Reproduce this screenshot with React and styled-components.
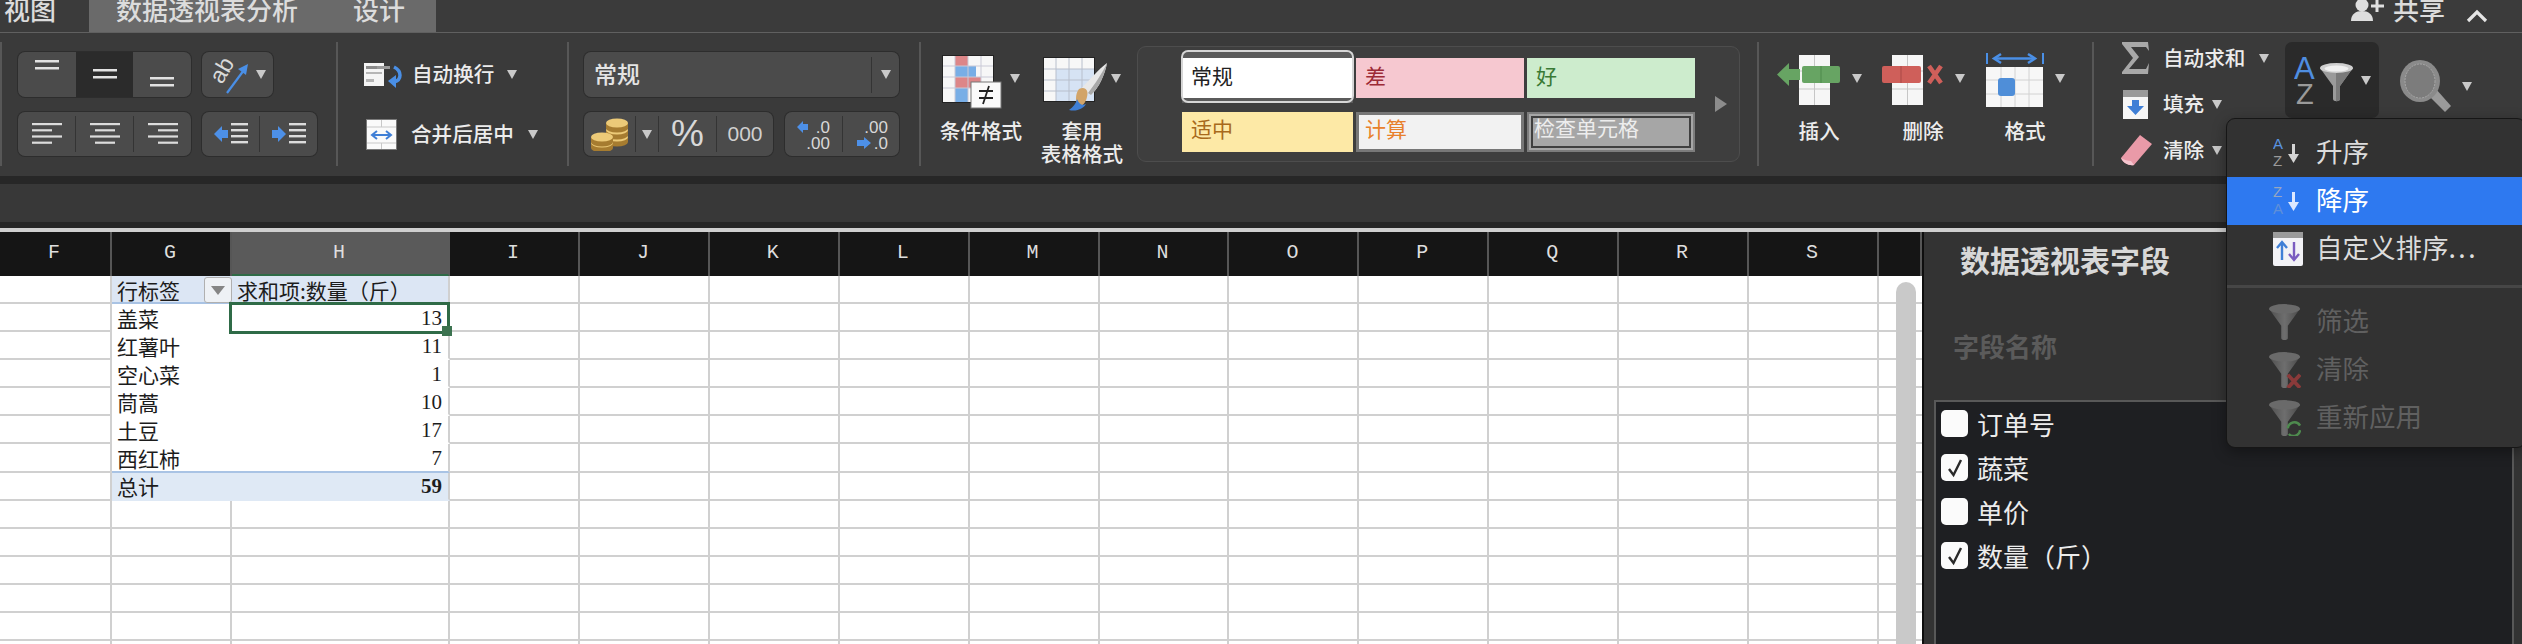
import styled, { createGlobalStyle } from "styled-components";

const CJK = `"Noto Sans CJK SC", "Noto Sans", sans-serif`;

const GlobalStyle = createGlobalStyle`
  html, body {
    margin: 0;
    padding: 0;
    background: #333;
    overflow: hidden;
  }
  body {
    font-family: ${CJK};
  }
`;

const Page = styled.div`
  position: relative;
  width: 2522px;
  height: 644px;
  overflow: hidden;
  background: #3a3a3a;
  color: #e2e2e2;
`;

/* ---------- tabs ---------- */

const TabBar = styled.div`
  display: flex;
  height: 32px;
  border-bottom: 1px solid #606060;
  box-sizing: content-box;
  background: #3b3b3b;
  overflow: hidden;
`;

const Tab = styled.div`
  font-size: 26px;
  font-weight: 500;
  line-height: 26px;
  margin-top: -4px;
  margin-left: ${(p) => p.$left || 0}px;
  color: #dcdcdc;
  white-space: nowrap;
`;

const ActiveTabs = styled.div`
  display: flex;
  width: 347px;
  height: 32px;
  margin-left: 33px;
  background: #6a6a6a;
`;

const Share = styled.div`
  display: flex;
  align-items: flex-start;
  margin-left: auto;
  padding-right: 34px;
`;

const ChevronBox = styled.span`
  margin: 4px 0 0 21px;
`;

/* ---------- ribbon ---------- */

const Ribbon = styled.div`
  display: flex;
  height: 143px;
  padding-top: 9px;
  box-sizing: border-box;
  background: #3a3a3a;
`;

const Section = styled.section`
  flex: none;
  display: ${(p) => (p.$flex ? "flex" : "block")};
  width: ${(p) => p.$w}px;
  height: 124px;
  box-sizing: border-box;
  padding-left: ${(p) => p.$pad}px;
  border-left: 2px solid #575757;
`;

const ToolRows = styled.div`
  display: grid;
  grid-template-rows: 45px 44px;
  row-gap: 15px;
  padding-top: 10px;
`;

const ToolRow = styled.div`
  display: flex;
  align-items: center;
  gap: ${(p) => p.$gap || 11}px;
`;

const Group = styled.div`
  display: flex;
  align-items: center;
  width: ${(p) => p.$w}px;
  height: 100%;
  box-sizing: border-box;
  border-radius: 7px;
  background: #4b4b4b;
  box-shadow: 0 0 0 1px #2d2d2d;
  overflow: hidden;
`;

const Segment = styled.div`
  flex: ${(p) => (p.$w ? "none" : "1")};
  width: ${(p) => (p.$w ? `${p.$w}px` : "auto")};
  height: 100%;
  display: flex;
  align-items: center;
  justify-content: center;
  gap: 6px;
  background: ${(p) => (p.$on ? "#2b2b2b" : "transparent")};
`;

const Divider = styled.span`
  flex: none;
  width: 1px;
  height: 36px;
  background: #343434;
`;

const Caret = styled.span`
  flex: none;
  width: 0;
  height: 0;
  margin-left: ${(p) => p.$left || 0}px;
  margin-top: ${(p) => p.$top || 0}px;
  border-left: 5px solid transparent;
  border-right: 5px solid transparent;
  border-top: 9px solid #c9c9c9;
`;

const WrapRow = styled.div`
  display: flex;
  align-items: center;
  height: 100%;
  padding-left: ${(p) => p.$left || 0}px;
`;

const ToolText = styled.span`
  margin-left: ${(p) => p.$left || 0}px;
  padding-bottom: 3px;
  font-size: ${(p) => p.$size || 20.6}px;
  font-weight: 500;
  color: #ececec;
  white-space: nowrap;
`;

const Combo = styled(Group)`
  padding-left: 10px;
`;

const ComboText = styled.span`
  flex: 1;
  padding-bottom: 3px;
  font-size: 23px;
  font-weight: 500;
  color: #e4e4e4;
`;

const Percent = styled.span`
  font-family: "Liberation Sans", sans-serif;
  font-size: 37px;
  color: #d8d8d8;
`;

const Thousands = styled.span`
  font-family: "Liberation Sans", sans-serif;
  font-size: 21px;
  color: #d0d0d0;
`;

const LargeButton = styled.div`
  flex: none;
  width: ${(p) => p.$w}px;
  display: flex;
  flex-direction: column;
  align-items: center;
`;

const LargeIcon = styled.div`
  display: flex;
  align-items: flex-start;
  height: 54px;
  margin: 10px 0 13px;
`;

const LargeLabel = styled.div`
  font-size: 20.6px;
  font-weight: 500;
  line-height: 23px;
  color: #ececec;
  text-align: center;
  white-space: nowrap;
`;

const Gallery = styled.div`
  flex: none;
  display: flex;
  width: 603px;
  height: 116px;
  margin: 4px 0 0 4px;
  box-sizing: border-box;
  border: 1px solid #4d4d4d;
  border-radius: 9px;
  background: #3e3e3e;
`;

const StyleGrid = styled.div`
  display: grid;
  grid-template-columns: 171px 168px 168px;
  grid-auto-rows: 40px;
  column-gap: 3px;
  row-gap: 14px;
  padding: 11px 0 0 44px;
`;

const StyleCell = styled.div`
  position: relative;
  box-sizing: border-box;
  padding-left: ${(p) => p.$pad || 9}px;
  font-size: 21px;
  line-height: ${(p) => p.$line || 33}px;
  background: ${(p) => p.$bg};
  color: ${(p) => p.$fg};
  border: ${(p) => p.$border || "none"};
  outline: ${(p) => p.$outline || "none"};
  outline-offset: -6px;
`;

const CurrentStyle = styled(StyleCell)`
  box-shadow: 0 -6px 0 #5b5b5b, 0 5px 0 #5b5b5b;
  &::after {
    content: "";
    position: absolute;
    inset: -8px -1px -5px -1px;
    border: 2px solid #d6d6d6;
    border-radius: 7px;
  }
`;

const MoreStyles = styled.span`
  width: 0;
  height: 0;
  margin: 49px 0 0 20px;
  border-top: 8px solid transparent;
  border-bottom: 8px solid transparent;
  border-left: 12px solid #8c8c8c;
`;

const EditList = styled.div`
  flex: none;
  display: grid;
  grid-auto-rows: 32px;
  row-gap: 14px;
  width: 165px;
`;

const EditRow = styled.div`
  display: flex;
  align-items: center;
`;

const EditIcon = styled.span`
  flex: none;
  display: flex;
  justify-content: center;
  width: 32px;
  margin-right: 11px;
`;

const SortButton = styled.div`
  flex: none;
  display: flex;
  align-items: center;
  gap: 5px;
  width: 94px;
  height: 76px;
  box-sizing: border-box;
  padding-left: 9px;
  border-radius: 7px;
  background: #2a2a2a;
`;

const FindButton = styled.div`
  flex: none;
  display: flex;
  align-items: center;
  gap: 11px;
  height: 64px;
  margin: 12px 0 0 20px;
`;

/* ---------- bars under the ribbon ---------- */

const Strip = styled.div`
  height: ${(p) => p.$h}px;
  background: ${(p) => p.$bg};
`;

/* ---------- sheet ---------- */

const Main = styled.div`
  display: flex;
  height: 412px;
`;

const Sheet = styled.div`
  position: relative;
  flex: none;
  width: 1922px;
  overflow: hidden;
  background: #fff;
`;

const COLUMNS = "112px 120px 218px 130px repeat(10, 129.9px) 1fr";

const HeaderRow = styled.div`
  display: grid;
  grid-template-columns: ${COLUMNS};
  height: 44px;
  background: #151515;
`;

const HeaderCell = styled.div`
  box-sizing: border-box;
  padding-right: 2px;
  border-right: 2px solid ${(p) => (p.$on ? "#5a5a5a" : "#565656")};
  border-bottom: ${(p) => (p.$on ? "3px solid #2f6b47" : "none")};
  background: ${(p) => (p.$on ? "#5a5a5a" : "transparent")};
  font-family: "Liberation Mono", monospace;
  font-size: 20px;
  line-height: 42px;
  text-align: center;
  color: #dedede;
`;

const Row = styled.div`
  display: grid;
  grid-template-columns: ${COLUMNS};
  grid-template-rows: 28.08px;
  height: 28.08px;
`;

const Cell = styled.div`
  position: relative;
  box-sizing: border-box;
  display: flex;
  align-items: center;
  justify-content: ${(p) => (p.$right ? "flex-end" : "flex-start")};
  min-height: 0;
  padding: 1px ${(p) => (p.$right ? 6 : 0)}px 0 ${(p) => (p.$right ? 0 : 5)}px;
  background: ${(p) => p.$fill || "#fff"};
  border-right: ${(p) => (p.$open ? "none" : "2px solid #d0d0d0")};
  border-bottom: 2px solid ${(p) => p.$line || "#d0d0d0"};
  font-size: 21px;
  line-height: 24px;
  color: #1c1c1c;
  white-space: nowrap;
`;

const Amount = styled.span`
  font-family: "Liberation Serif", serif;
  font-size: 21px;
  font-weight: ${(p) => (p.$bold ? 700 : 400)};
`;

const FilterButton = styled.span`
  position: absolute;
  top: 1px;
  right: 0;
  display: flex;
  align-items: center;
  justify-content: center;
  width: 28px;
  height: 26px;
  box-sizing: border-box;
  border: 1px solid #b0b0b0;
  border-radius: 3px;
  background: #eef1f5;
  &::after {
    content: "";
    border-left: 7px solid transparent;
    border-right: 7px solid transparent;
    border-top: 9px solid #858585;
  }
`;

const Selection = styled.span`
  position: absolute;
  top: -2px;
  right: -2px;
  bottom: -4px;
  left: -3px;
  border: 3px solid #2f6b47;
  z-index: 2;
`;

const FillHandle = styled.span`
  position: absolute;
  right: -5px;
  bottom: -5px;
  width: 10px;
  height: 10px;
  background: #3c7350;
`;

const ScrollThumb = styled.div`
  position: absolute;
  top: 50px;
  bottom: -20px;
  left: 1896px;
  width: 20px;
  border-radius: 10px;
  background: #c9c9c9;
`;

/* ---------- field panel ---------- */

const Panel = styled.aside`
  flex: 1;
  box-sizing: border-box;
  padding-top: 7px;
  border-left: 2px solid #0e0e0e;
  background: #333;
`;

const PanelTitle = styled.h2`
  margin: 0;
  padding-left: 36px;
  font-size: 30px;
  font-weight: 700;
  line-height: 40px;
  color: #d8d8d8;
`;

const PanelLabel = styled.div`
  margin-top: 47px;
  padding-left: 29px;
  font-size: 26px;
  font-weight: 700;
  line-height: 40px;
  color: #5b5b5b;
`;

const FieldList = styled.div`
  width: 580px;
  height: 260px;
  margin: 34px 0 0 10px;
  padding: 8px 0 0 5px;
  box-sizing: border-box;
  border: 2px solid #585858;
  background: #1e1f22;
`;

const FieldRow = styled.div`
  display: flex;
  align-items: flex-start;
  gap: 9px;
  height: 44px;
  font-size: 26px;
  line-height: 27px;
  color: #ececec;
`;

const CheckBox = styled.span`
  flex: none;
  display: flex;
  align-items: center;
  justify-content: center;
  width: 27px;
  height: 27px;
  border-radius: 5px;
  background: #fbfbfb;
`;

/* ---------- sort menu ---------- */

const Menu = styled.div`
  position: absolute;
  top: 118px;
  left: 2226px;
  z-index: 5;
  width: 300px;
  height: 330px;
  box-sizing: border-box;
  padding-top: 10px;
  border: 1px solid #161616;
  border-radius: 9px;
  background: #323232;
  box-shadow: 0 4px 14px rgba(0, 0, 0, 0.35);
`;

const MenuItem = styled.div`
  display: flex;
  align-items: center;
  height: 48px;
  box-sizing: border-box;
  padding-left: ${(p) => p.$left || 42}px;
  padding-bottom: 6px;
  background: ${(p) => (p.$on ? "#2e79f0" : "transparent")};
  color: ${(p) => (p.$on ? "#fff" : p.$off ? "#606060" : "#dcdcdc")};
  font-size: 26.5px;
  white-space: nowrap;
`;

const MenuIcon = styled.span`
  flex: none;
  display: flex;
  width: ${(p) => p.$w || 47}px;
  margin-top: 6px;
`;

const Dots = styled.span`
  letter-spacing: 2.5px;
`;

const MenuRule = styled.div`
  height: 3px;
  margin: 12px 0 10px;
  background: #464646;
`;

/* ---------- drawings ---------- */

const VAlignIcon = ({ y }) => (
  <svg width="26" height="36" viewBox="0 0 26 36">
    <rect x="1" y={y} width="24" height="2.5" fill="#e2e2e2" />
    <rect x="1" y={y + 7} width="24" height="2.5" fill="#e2e2e2" />
  </svg>
);

const HAlignIcon = ({ mode }) => {
  const rows = [30, 20, 30, 20];
  return (
    <svg width="32" height="24" viewBox="0 0 32 24">
      {rows.map((w, i) => {
        const x = mode === "left" ? 1 : mode === "right" ? 31 - w : 16 - w / 2;
        return <rect key={i} x={x} y={i * 6.2 + 1} width={w} height="2.2" fill="#dcdcdc" />;
      })}
    </svg>
  );
};

const IndentIcon = ({ out }) => (
  <svg width="36" height="26" viewBox="0 0 36 26">
    {out ? (
      <polygon points="1,13 9,5 9,9 15,9 15,17 9,17 9,21" fill="#4d90e8" />
    ) : (
      <polygon points="15,13 7,5 7,9 1,9 1,17 7,17 7,21" fill="#4d90e8" />
    )}
    {[2, 8, 14, 20].map((y) => (
      <rect key={y} x="18" y={y} width="17" height="2.4" fill="#dcdcdc" />
    ))}
  </svg>
);

const OrientIcon = () => (
  <svg width="40" height="40" viewBox="0 0 40 40">
    <text
      x="0"
      y="0"
      transform="translate(12 30) rotate(-60)"
      fontFamily="Liberation Sans"
      fontSize="23"
      fill="#d9d9d9"
    >
      ab
    </text>
    <path d="M17 38 L34 15" stroke="#4a8fe6" strokeWidth="2.2" fill="none" />
    <polygon points="38,9 36,20 28,14" fill="#4a8fe6" />
  </svg>
);

const WrapIcon = () => (
  <svg width="38" height="26" viewBox="0 0 38 26">
    <rect x="0" y="1" width="20" height="23" fill="#f4f4f4" />
    <rect x="2" y="4" width="11" height="3" fill="#8a8a8a" />
    <rect x="2" y="10" width="16" height="2" fill="#b5b5b5" />
    <rect x="2" y="17" width="8" height="3" fill="#b5b5b5" />
    <rect x="13" y="4" width="13" height="3" fill="#9a9a9a" />
    <path d="M30 5 C38 9 38 18 30 20" stroke="#4a8fe6" strokeWidth="3.5" fill="none" />
    <polygon points="24,19 32,13 32,26" fill="#4a8fe6" />
  </svg>
);

const MergeIcon = () => (
  <svg width="31" height="31" viewBox="0 0 31 31">
    <rect x="0.5" y="0.5" width="30" height="30" fill="#fafafa" stroke="#7a7a7a" />
    <path d="M15.5 1V8M15.5 24V30M1 8H30M1 24H30" stroke="#c8c8c8" />
    <path d="M7 16H24" stroke="#3f7fd6" strokeWidth="2" />
    <path d="M11 12L6 16L11 20M20 12L25 16L20 20" stroke="#3f7fd6" strokeWidth="2" fill="none" />
  </svg>
);

const Coin = ({ x, y }) => (
  <g>
    <path d={`M${x} ${y}v5a11 4.5 0 0 0 22 0v-5`} fill="#a67c30" />
    <ellipse cx={x + 11} cy={y} rx="11" ry="4.5" fill="#ecca78" />
  </g>
);

const CoinsIcon = () => (
  <svg width="38" height="34" viewBox="0 0 38 34">
    <Coin x={15} y={20} />
    <Coin x={15} y={13} />
    <Coin x={15} y={6} />
    <Coin x={0} y={26} />
    <Coin x={0} y={20} />
  </svg>
);

const DecimalIcon = ({ more }) => (
  <svg width="40" height="36" viewBox="0 0 40 36">
    <text x="37" y="17" fontFamily="Liberation Sans" fontSize="17" fill="#d8d8d8" textAnchor="end">
      {more ? ".0" : ".00"}
    </text>
    <text x="37" y="33" fontFamily="Liberation Sans" fontSize="17" fill="#d8d8d8" textAnchor="end">
      {more ? ".00" : ".0"}
    </text>
    {more ? (
      <polygon points="4,11 10,5 10,8 15,8 15,14 10,14 10,17" fill="#4d90e8" />
    ) : (
      <polygon points="20,27 13,21 13,24 6,24 6,30 13,30 13,33" fill="#4d90e8" />
    )}
  </svg>
);

const ConditionalIcon = () => (
  <svg width="62" height="58" viewBox="0 0 62 58">
    <rect x="0.5" y="3.5" width="51" height="47" fill="#f7f7f7" stroke="#222" />
    <rect x="13" y="4" width="13" height="10" fill="#dd8688" />
    <rect x="13" y="14" width="21" height="11" fill="#78aee6" />
    <rect x="13" y="25" width="26" height="11" fill="#dd8688" />
    <rect x="13" y="36" width="13" height="14" fill="#78aee6" />
    <path d="M13 4V50M26 4V50M39 4V50M1 14H51M1 25H51M1 36H51" stroke="#c9c9d6" strokeWidth="1" />
    <rect x="29" y="30" width="30" height="26" fill="#fafafa" stroke="#777" />
    <path d="M37 39H51M37 46H51M47 34L41 52" stroke="#222" strokeWidth="1.8" fill="none" />
  </svg>
);

const TableFormatIcon = () => (
  <svg width="68" height="60" viewBox="0 0 68 60">
    <rect x="0.5" y="5.5" width="51" height="44" fill="#f7f7f7" stroke="#222" />
    <rect x="13" y="17" width="38" height="32" fill="#d6e3f4" />
    <path d="M13 6V49M26 6V49M39 6V49M1 17H51M1 28H51M1 39H51" stroke="#b8bfcc" strokeWidth="1" />
    <path d="M64 11C62 22 56 36 48 43L38 37C46 28 56 17 64 11Z" fill="#e8e8e8" />
    <path d="M64 11C62 22 56 36 48 43L45 41C52 32 60 20 64 11Z" fill="#a9a9a9" />
    <path d="M36 37C42 34 46 38 44 45C43 50 40 54 36 55C32 51 32 42 36 37Z" fill="#d2a468" />
    <path d="M26 58C30 55 33 52 34 47C36 52 39 54 43 52C41 56 34 60 26 58Z" fill="#3f7fd6" />
  </svg>
);

const InsertIcon = () => (
  <svg width="64" height="56" viewBox="0 0 64 56">
    <rect x="22" y="3" width="31" height="50" fill="#f6f6f6" />
    <path d="M37.5 3V53M22 19H53M22 37H53" stroke="#c6c6c6" />
    <polygon points="0,22.5 12,11 12,34" fill="#67a463" />
    <rect x="11" y="17" width="12" height="11" fill="#67a463" />
    <rect x="25" y="14" width="38" height="17" rx="2" fill="#67a463" />
    <path d="M44 14V31" stroke="#4f8a4c" />
  </svg>
);

const DeleteIcon = () => (
  <svg width="62" height="56" viewBox="0 0 62 56">
    <rect x="10" y="3" width="31" height="50" fill="#f6f6f6" />
    <path d="M25.5 3V53M10 19H41M10 37H41" stroke="#c6c6c6" />
    <rect x="0" y="14" width="39" height="17" rx="2" fill="#cf5f5a" />
    <path d="M19 14V31" stroke="#a94a46" />
    <path d="M47 14L59 31M59 14L47 31" stroke="#cf5f5a" strokeWidth="4.5" />
  </svg>
);

const CellFormatIcon = () => (
  <svg width="58" height="56" viewBox="0 0 58 56">
    <path d="M1 1V12M57 1V12" stroke="#4a8fe6" strokeWidth="2" />
    <path d="M8 6.5H48" stroke="#4a8fe6" strokeWidth="2.5" />
    <path d="M15 2L8 6.5L15 11M42 2L49 6.5L42 11" stroke="#4a8fe6" strokeWidth="2.5" fill="none" />
    <rect x="0" y="15" width="57" height="40" fill="#f7f7f7" />
    <path d="M15 15V55M29 15V55M43 15V55M0 28H57M0 42H57" stroke="#d2d2d2" />
    <rect x="12" y="26" width="17" height="18" rx="3" fill="#4f8ed8" />
  </svg>
);

const SigmaIcon = () => (
  <svg width="28" height="32" viewBox="0 0 28 32">
    <polygon
      points="0,0 26,0 27,9 24,5 9,5 17,15 7,27 24,27 27,21 26,32 0,32 0,30 11,16 0,2"
      fill="#a8a8a8"
    />
  </svg>
);

const FillIcon = () => (
  <svg width="26" height="29" viewBox="0 0 26 29">
    <rect x="0" y="0" width="25" height="29" fill="#f6f6f6" />
    <rect x="0" y="0" width="25" height="7" fill="#9a9a9a" />
    <polygon points="12.5,25 4,16 9,16 9,10 16,10 16,16 21,16" fill="#3f7fd6" />
  </svg>
);

const EraserIcon = () => (
  <svg width="32" height="32" viewBox="0 0 32 32">
    <path d="M20 1L32 10L14 31C9 32 3 29 1 24Z" fill="#e99aa8" />
    <path d="M1 24C3 29 9 32 14 31L11 27C8 27 4 26 1 24Z" fill="#f4c5cf" />
  </svg>
);

const Funnel = ({ id, children }) => (
  <svg width="32" height="36" viewBox="0 0 34 38">
    <defs>
      <linearGradient id={id} x1="0" x2="1" y1="0" y2="0">
        <stop offset="0" stopColor="#4f4f4f" />
        <stop offset="0.5" stopColor="#6e6e6e" />
        <stop offset="1" stopColor="#4a4a4a" />
      </linearGradient>
    </defs>
    <path d="M0 5L13 23V36C13 39 20 39 20 36V23L33 5Z" fill={`url(#${id})`} />
    <ellipse cx="16.5" cy="5" rx="16.5" ry="5" fill="#6a6a6a" />
    {children}
  </svg>
);

const SortFilterIcon = () => (
  <svg width="62" height="50" viewBox="0 0 62 50">
    <text x="0" y="24" fontFamily="Liberation Sans" fontSize="31" fill="#4f8ee0">A</text>
    <text x="2" y="49" fontFamily="Liberation Sans" fontSize="29" fill="#9a9a9a">Z</text>
    <g transform="translate(26 8)">
      <path d="M0 5L13 23V36C13 39 20 39 20 36V23L33 5Z" fill="#9a9a9a" />
      <path d="M16 8L33 5L20 23V36C20 38 17 38.5 16 38Z" fill="#7a7a7a" />
      <ellipse cx="16.5" cy="5" rx="16.5" ry="5" fill="#cfcfcf" />
      <ellipse cx="16.5" cy="5.6" rx="12" ry="3" fill="#f0f0f0" />
    </g>
  </svg>
);

const FindIcon = () => (
  <svg width="52" height="52" viewBox="0 0 52 52">
    <path d="M30 36L46 52L52 46L37 29Z" fill="#9a9a9a" />
    <ellipse cx="21" cy="21" rx="20" ry="21" fill="#8a8a8a" />
    <ellipse cx="21" cy="21" rx="15" ry="17" fill="#7c7c7c" stroke="#a6a6a6" strokeDasharray="2 1" />
  </svg>
);

const ShareIcon = () => (
  <svg width="36" height="22" viewBox="0 0 36 22">
    <circle cx="11" cy="5" r="6.5" fill="#dedede" />
    <path d="M0 21C0 14 5 11 11 11C17 11 22 14 22 21Z" fill="#dedede" />
    <path d="M26 0V12M20 6H33" stroke="#dedede" strokeWidth="3" />
  </svg>
);

const ChevronUp = () => (
  <svg width="22" height="14" viewBox="0 0 22 14">
    <path d="M2 12L11 3L20 12" stroke="#e4e4e4" strokeWidth="3.2" fill="none" />
  </svg>
);

const SortArrow = ({ x, color }) => (
  <g>
    <rect x={x + 3} y="9" width="3" height="14" fill={color} />
    <polygon points={`${x - 1},19 ${x + 10},19 ${x + 4.5},28`} fill={color} />
  </g>
);

const AscIcon = ({ swap }) => (
  <svg width="34" height="36" viewBox="0 0 34 36">
    <text x="0" y="14" fontFamily="Liberation Sans" fontSize="15" fill={swap ? "#96a6c0" : "#5a94e0"}>
      {swap ? "Z" : "A"}
    </text>
    <text x="0" y="31" fontFamily="Liberation Sans" fontSize="15" fill={swap ? "#5f8fd8" : "#9a9a9a"}>
      {swap ? "A" : "Z"}
    </text>
    <SortArrow x={16} color={swap ? "#dce8ff" : "#d4d4d4"} />
  </svg>
);

const CustomSortIcon = () => (
  <svg width="31" height="35" viewBox="0 0 31 35">
    <rect width="30" height="34" rx="2" fill="#f2f2f6" />
    <rect width="30" height="6" fill="#9b9b9b" />
    <path d="M9 28V11M4 16L9 10L14 16" stroke="#3f7fd6" strokeWidth="2.4" fill="none" />
    <path d="M21 10V27M16 22L21 28L26 22" stroke="#7a5cc0" strokeWidth="2.4" fill="none" />
  </svg>
);

const CheckMark = () => (
  <svg width="18" height="20" viewBox="0 0 18 20">
    <path d="M3 11L7.5 17L15 2" stroke="#2a2a2a" strokeWidth="2.4" fill="none" />
  </svg>
);

/* ---------- data ---------- */

const LETTERS = ["F", "G", "H", "I", "J", "K", "L", "M", "N", "O", "P", "Q", "R", "S", ""];

const PIVOT = [
  ["盖菜", 13],
  ["红薯叶", 11],
  ["空心菜", 1],
  ["茼蒿", 10],
  ["土豆", 17],
  ["西红柿", 7],
];

const PIVOT_FILL = "#dce6f4";
const PIVOT_LINE = "#a9c3e4";
const BLANK_ROWS = 6;
const FIELDS = [
  ["订单号", false],
  ["蔬菜", true],
  ["单价", false],
  ["数量（斤）", true],
];

const BlankCells = ({ from = 3 }) =>
  LETTERS.slice(from).map((l, i) => <Cell key={i} $open={l === ""} />);

const Pivot = () => (
  <>
    <Row>
      <Cell />
      <Cell $fill={PIVOT_FILL} $line={PIVOT_LINE} $open>
        行标签
        <FilterButton />
      </Cell>
      <Cell $fill={PIVOT_FILL} $line={PIVOT_LINE}>
        求和项:数量（斤）
      </Cell>
      <BlankCells />
    </Row>
    {PIVOT.map(([name, qty], i) => (
      <Row key={name}>
        <Cell />
        <Cell $open $line={i === PIVOT.length - 1 ? PIVOT_LINE : "#fff"}>
          {name}
        </Cell>
        <Cell $right $line={i === PIVOT.length - 1 ? PIVOT_LINE : "#fff"}>
          <Amount>{qty}</Amount>
          {i === 0 && (
            <Selection>
              <FillHandle />
            </Selection>
          )}
        </Cell>
        <BlankCells />
      </Row>
    ))}
    <Row>
      <Cell />
      <Cell $fill="#dfe9f5" $line="#dfe9f5" $open>
        总计
      </Cell>
      <Cell $fill="#dfe9f5" $line="#dfe9f5" $right>
        <Amount $bold>59</Amount>
      </Cell>
      <BlankCells />
    </Row>
    {Array.from({ length: BLANK_ROWS }, (_, i) => (
      <Row key={i}>
        <BlankCells from={0} />
      </Row>
    ))}
  </>
);

export default function App() {
  return (
    <Page>
      <GlobalStyle />
      <TabBar>
        <Tab $left={4}>视图</Tab>
        <ActiveTabs>
          <Tab $left={27}>数据透视表分析</Tab>
          <Tab $left={55}>设计</Tab>
        </ActiveTabs>
        <Share>
          <ShareIcon />
          <Tab $left={6}>共享</Tab>
          <ChevronBox>
            <ChevronUp />
          </ChevronBox>
        </Share>
      </TabBar>

      <Ribbon>
        <Section $w={336} $pad={16}>
          <ToolRows>
            <ToolRow>
              <Group $w={173}>
                <Segment><VAlignIcon y={3} /></Segment>
                <Segment $on><VAlignIcon y={12} /></Segment>
                <Segment><VAlignIcon y={20} /></Segment>
              </Group>
              <Group $w={71}>
                <Segment>
                  <OrientIcon />
                  <Caret />
                </Segment>
              </Group>
            </ToolRow>
            <ToolRow>
              <Group $w={173}>
                <Segment><HAlignIcon mode="left" /></Segment>
                <Divider />
                <Segment><HAlignIcon mode="center" /></Segment>
                <Divider />
                <Segment><HAlignIcon mode="right" /></Segment>
              </Group>
              <Group $w={115}>
                <Segment><IndentIcon out /></Segment>
                <Divider />
                <Segment><IndentIcon /></Segment>
              </Group>
            </ToolRow>
          </ToolRows>
        </Section>

        <Section $w={231} $pad={26}>
          <ToolRows>
            <WrapRow>
              <WrapIcon />
              <ToolText $left={10}>自动换行</ToolText>
              <Caret $left={13} />
            </WrapRow>
            <WrapRow $left={2}>
              <MergeIcon />
              <ToolText $left={14}>合并后居中</ToolText>
              <Caret $left={14} />
            </WrapRow>
          </ToolRows>
        </Section>

        <Section $w={352} $pad={15}>
          <ToolRows>
            <ToolRow>
              <Combo $w={315}>
                <ComboText>常规</ComboText>
                <Divider />
                <Segment $w={27}><Caret /></Segment>
              </Combo>
            </ToolRow>
            <ToolRow $gap={12}>
              <Group $w={189}>
                <Segment $w={51}><CoinsIcon /></Segment>
                <Divider />
                <Segment $w={22}><Caret /></Segment>
                <Divider />
                <Segment $w={57}><Percent>%</Percent></Segment>
                <Divider />
                <Segment><Thousands>000</Thousands></Segment>
              </Group>
              <Group $w={114}>
                <Segment><DecimalIcon more /></Segment>
                <Divider />
                <Segment><DecimalIcon /></Segment>
              </Group>
            </ToolRow>
          </ToolRows>
        </Section>

        <Section $w={838} $pad={10} $flex>
          <LargeButton $w={100}>
            <LargeIcon>
              <ConditionalIcon />
              <Caret $left={6} $top={22} />
            </LargeIcon>
            <LargeLabel>条件格式</LargeLabel>
          </LargeButton>
          <LargeButton $w={102}>
            <LargeIcon>
              <TableFormatIcon />
              <Caret $top={22} />
            </LargeIcon>
            <LargeLabel>
              套用
              <br />
              表格格式
            </LargeLabel>
          </LargeButton>
          <Gallery>
            <StyleGrid>
              <CurrentStyle $bg="#fff" $fg="#222" $line={35}>常规</CurrentStyle>
              <StyleCell $bg="#f6c8d0" $fg="#9c2b36" $line={35}>差</StyleCell>
              <StyleCell $bg="#cdeccd" $fg="#3a7a35" $line={35}>好</StyleCell>
              <StyleCell $bg="#fde9a6" $fg="#a8691c">适中</StyleCell>
              <StyleCell $bg="#f2f2f2" $fg="#e8812c" $border="3px solid #777" $pad={6} $line={27}>
                计算
              </StyleCell>
              <StyleCell
                $bg="#a6a6a6"
                $fg="#ededed"
                $border="2px solid #7d7d7d"
                $outline="2px solid #3f3f3f"
                $pad={5}
                $line={27}
              >
                检查单元格
              </StyleCell>
            </StyleGrid>
            <MoreStyles />
          </Gallery>
        </Section>

        <Section $w={335} $pad={8} $flex>
          <LargeButton $w={104}>
            <LargeIcon>
              <InsertIcon />
              <Caret $left={11} $top={22} />
            </LargeIcon>
            <LargeLabel>插入</LargeLabel>
          </LargeButton>
          <LargeButton $w={104}>
            <LargeIcon>
              <DeleteIcon />
              <Caret $left={11} $top={22} />
            </LargeIcon>
            <LargeLabel>删除</LargeLabel>
          </LargeButton>
          <LargeButton $w={100}>
            <LargeIcon>
              <CellFormatIcon />
              <Caret $left={11} $top={22} />
            </LargeIcon>
            <LargeLabel>格式</LargeLabel>
          </LargeButton>
        </Section>

        <Section $w={430} $pad={26} $flex>
          <EditList>
            <EditRow>
              <EditIcon><SigmaIcon /></EditIcon>
              <ToolText>自动求和</ToolText>
              <Caret $left={14} />
            </EditRow>
            <EditRow>
              <EditIcon><FillIcon /></EditIcon>
              <ToolText>填充</ToolText>
              <Caret $left={8} />
            </EditRow>
            <EditRow>
              <EditIcon><EraserIcon /></EditIcon>
              <ToolText>清除</ToolText>
              <Caret $left={8} />
            </EditRow>
          </EditList>
          <SortButton>
            <SortFilterIcon />
            <Caret />
          </SortButton>
          <FindButton>
            <FindIcon />
            <Caret />
          </FindButton>
        </Section>
      </Ribbon>

      <Strip $h={8} $bg="#272727" />
      <Strip $h={38} $bg="#383838" />
      <Strip $h={6} $bg="#262626" />
      <Strip $h={4} $bg="#cfcfcf" />

      <Main>
        <Sheet>
          <HeaderRow>
            {LETTERS.map((l, i) => (
              <HeaderCell key={i} $on={l === "H"}>{l}</HeaderCell>
            ))}
          </HeaderRow>
          <Pivot />
          <ScrollThumb />
        </Sheet>
        <Panel>
          <PanelTitle>数据透视表字段</PanelTitle>
          <PanelLabel>字段名称</PanelLabel>
          <FieldList>
            {FIELDS.map(([name, on]) => (
              <FieldRow key={name}>
                <CheckBox>{on && <CheckMark />}</CheckBox>
                {name}
              </FieldRow>
            ))}
          </FieldList>
        </Panel>
      </Main>

      <Menu>
        <MenuItem $left={46}>
          <MenuIcon $w={43}><AscIcon /></MenuIcon>
          升序
        </MenuItem>
        <MenuItem $on $left={46}>
          <MenuIcon $w={43}><AscIcon swap /></MenuIcon>
          降序
        </MenuItem>
        <MenuItem $left={46}>
          <MenuIcon $w={43}><CustomSortIcon /></MenuIcon>
          自定义排序<Dots>...</Dots>
        </MenuItem>
        <MenuRule />
        <MenuItem $off>
          <MenuIcon><Funnel id="f1" /></MenuIcon>
          筛选
        </MenuItem>
        <MenuItem $off>
          <MenuIcon>
            <Funnel id="f2">
              <path d="M20 24L33 38M33 24L20 38" stroke="#8a3a3a" strokeWidth="4" />
            </Funnel>
          </MenuIcon>
          清除
        </MenuItem>
        <MenuItem $off>
          <MenuIcon>
            <Funnel id="f3">
              <path d="M20 30A7 7 0 0 1 33 27M33 32A7 7 0 0 1 21 36" stroke="#4e8a4e" strokeWidth="2.6" fill="none" />
            </Funnel>
          </MenuIcon>
          重新应用
        </MenuItem>
      </Menu>
    </Page>
  );
}
